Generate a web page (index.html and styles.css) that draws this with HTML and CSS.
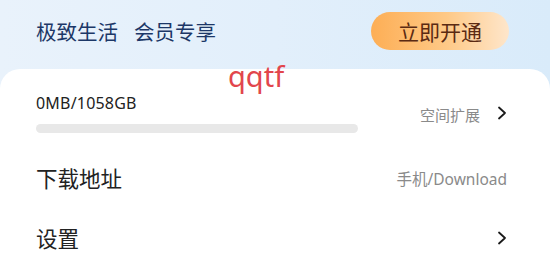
FILE: index.html
```html
<!DOCTYPE html>
<html lang="zh">
<head>
<meta charset="utf-8">
<link rel="stylesheet" href="styles.css">
</head>
<body>
<div class="page">
  <header class="vip">
    <div class="vip-title"><span>极致生活</span><span class="gap">会员专享</span></div>
    <button class="vip-btn">立即开通</button>
  </header>
  <div class="tag">qqtf</div>
  <main class="card">
    <div class="row storage">
      <div class="usage">
        <div class="usage-text">0MB/1058GB</div>
        <div class="bar"><div class="bar-fill" style="width:0%"></div></div>
      </div>
      <div class="right">
        <span class="sub small">空间扩展</span>
        <svg class="chev" width="10" height="14" viewBox="0 0 10 14"><polyline points="2,1.5 8,7 2,12.5" fill="none" stroke="#1a1a1a" stroke-width="1.8" stroke-linecap="round" stroke-linejoin="round"/></svg>
      </div>
    </div>
    <div class="row item">
      <div class="label">下载地址</div>
      <div class="right"><span class="sub">手机/Download</span></div>
    </div>
    <div class="row item">
      <div class="label">设置</div>
      <div class="right">
        <svg class="chev" width="10" height="14" viewBox="0 0 10 14"><polyline points="2,1.5 8,7 2,12.5" fill="none" stroke="#1a1a1a" stroke-width="1.8" stroke-linecap="round" stroke-linejoin="round"/></svg>
      </div>
    </div>
  </main>
</div>
</body>
</html>
```

FILE: styles.css
```css
html, body {
  margin: 0;
  padding: 0;
}
body {
  width: 550px;
  height: 275px;
  overflow: hidden;
  font-family: "Noto Sans", "Noto Sans CJK SC", sans-serif;
  background: linear-gradient(90deg, #e9f2fb 0%, #e2effb 50%, #d9ebfa 100%);
}
.page {
  position: relative;
  width: 550px;
  height: 275px;
  display: flex;
  flex-direction: column;
}
.vip {
  padding: 0 41px 7px 36px;
  display: flex;
  align-items: center;
  justify-content: space-between;
  box-sizing: border-box;
  height: 69px;
}
.vip-title {
  font-size: 20.5px;
  line-height: 28px;
  color: #1c3767;
  font-family: "Noto Sans CJK SC", sans-serif;
}
.vip-title .gap {
  margin-left: 16px;
}
.vip-btn {
  width: 138px;
  height: 38px;
  border: none;
  border-radius: 19px;
  background: linear-gradient(90deg, #fdae55 0%, #fec987 55%, #fee6cb 100%);
  color: #5b2a12;
  font-family: "Noto Sans CJK SC", sans-serif;
  font-size: 21px;
  padding: 0;
}
.tag {
  position: absolute;
  left: 228px;
  top: 59px;
  font-size: 29px;
  line-height: 34px;
  color: #e2464c;
  font-family: "Noto Sans", sans-serif;
  z-index: 2;
}
.card {
  flex: 1;
  background: #ffffff;
  border-radius: 20px 20px 0 0;
  padding: 0 43px 0 36px;
}
.row {
  display: flex;
  align-items: center;
  justify-content: space-between;
}
.storage {
  padding-top: 24px;
  margin-bottom: 15px;
}
.usage {
  width: 322px;
  display: flex;
  flex-direction: column;
  gap: 10px;
}
.usage-text {
  font-size: 16px;
  line-height: 21px;
  letter-spacing: 0.2px;
  color: #222;
}
.bar {
  height: 9px;
  border-radius: 5px;
  background: #e8e8e8;
  overflow: hidden;
}
.bar-fill {
  height: 100%;
  background: #4a8df8;
}
.right {
  display: flex;
  align-items: center;
  gap: 17px;
}
.sub {
  font-size: 15.5px;
  color: #8a8a8a;
}
.sub.small {
  font-size: 15px;
  padding-top: 3px;
}
.chev {
  display: block;
}
.item {
  height: 60px;
}
.label {
  font-size: 21.5px;
  line-height: 28px;
  color: #222;
  font-family: "Noto Sans CJK SC", sans-serif;
}
```
